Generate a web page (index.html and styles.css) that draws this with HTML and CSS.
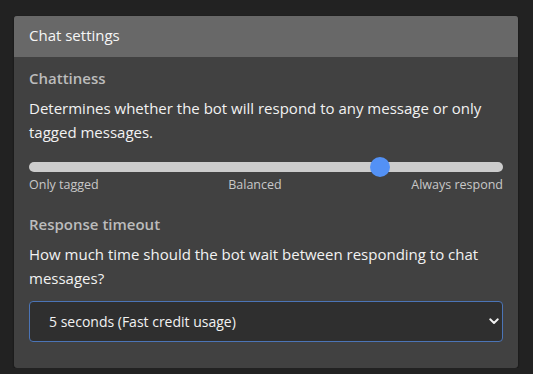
FILE: index.html
```html
<!DOCTYPE html>
<html lang="en">
<head>
<meta charset="utf-8">
<title>Chat settings</title>
<link rel="stylesheet" href="styles.css">
</head>
<body>
<section class="card">
  <header class="card-header">Chat settings</header>
  <div class="card-body">
    <h3 class="field-title">Chattiness</h3>
    <p class="field-desc">Determines whether the bot will respond to any message or only tagged messages.</p>
    <input class="slider" type="range" min="0" max="100" value="75">
    <div class="slider-labels">
      <span>Only tagged</span>
      <span>Balanced</span>
      <span>Always respond</span>
    </div>
    <h3 class="field-title second">Response timeout</h3>
    <p class="field-desc">How much time should the bot wait between responding to chat messages?</p>
    <div class="select-wrap">
      <select class="select">
        <option>5 seconds (Fast credit usage)</option>
      </select>
      <svg class="chevron" width="10" height="7" viewBox="0 0 10 7"><path d="M1.2 1.3 L5 5 L8.8 1.3" fill="none" stroke="#f2f2f2" stroke-width="1.9" stroke-linecap="round" stroke-linejoin="round"/></svg>
    </div>
  </div>
</section>
</body>
</html>
```
FILE: styles.css
```css
html, body {
  margin: 0;
  padding: 0;
  background: #222222;
}
body {
  font-family: "Open Sans", "Noto Sans", sans-serif;
  font-size: 15px;
  color: #f2f2f2;
}
.card {
  width: 504px;
  margin: 16px 0 0 14px;
  background: #414141;
  border-radius: 3px;
  overflow: hidden;
  box-shadow: 0 1px 2px rgba(0, 0, 0, 0.6);
}
.card-header {
  background: #686868;
  color: #f6f6f6;
  height: 41px;
  box-sizing: border-box;
  padding: 8px 15px 11px;
  line-height: 22px;
  font-size: 15px;
}
.card-body {
  padding: 11px 15px 26px;
}
.field-title {
  margin: 0;
  font-size: 15px;
  line-height: 21px;
  font-weight: 600;
  color: #bcbcbc;
}
.field-title.second {
  margin-top: 22px;
}
.field-desc {
  margin: 7px 0 0;
  line-height: 24px;
  color: #f2f2f2;
}
.slider {
  -webkit-appearance: none;
  appearance: none;
  display: block;
  width: 100%;
  height: 20px;
  margin: 13px 0 0;
  padding: 0;
  background: transparent;
  outline: none;
}
.slider::-webkit-slider-runnable-track {
  height: 10px;
  border-radius: 5px;
  background: #cccccc;
}
.slider::-webkit-slider-thumb {
  -webkit-appearance: none;
  appearance: none;
  width: 20px;
  height: 20px;
  margin-top: -5px;
  border-radius: 50%;
  background: #5391f5;
  border: none;
}
.slider::-moz-range-track {
  height: 10px;
  border-radius: 5px;
  background: #cccccc;
}
.slider::-moz-range-thumb {
  width: 20px;
  height: 20px;
  border-radius: 50%;
  background: #5391f5;
  border: none;
}
.slider-labels {
  display: flex;
  justify-content: space-between;
  font-size: 12.5px;
  line-height: 15px;
  color: #c8c8c8;
}
.select-wrap {
  position: relative;
  margin-top: 11px;
}
.select {
  -webkit-appearance: none;
  appearance: none;
  display: block;
  width: 100%;
  height: 41px;
  box-sizing: border-box;
  margin: 0;
  padding: 0 30px 0 19px;
  background: #2f2f2f;
  border: 1px solid #4b74b6;
  border-radius: 4px;
  color: #f2f2f2;
  font-family: "Open Sans", "Noto Sans", sans-serif;
  font-size: 14px;
  outline: none;
}
.chevron {
  position: absolute;
  right: 4px;
  top: 17px;
  pointer-events: none;
}
```
